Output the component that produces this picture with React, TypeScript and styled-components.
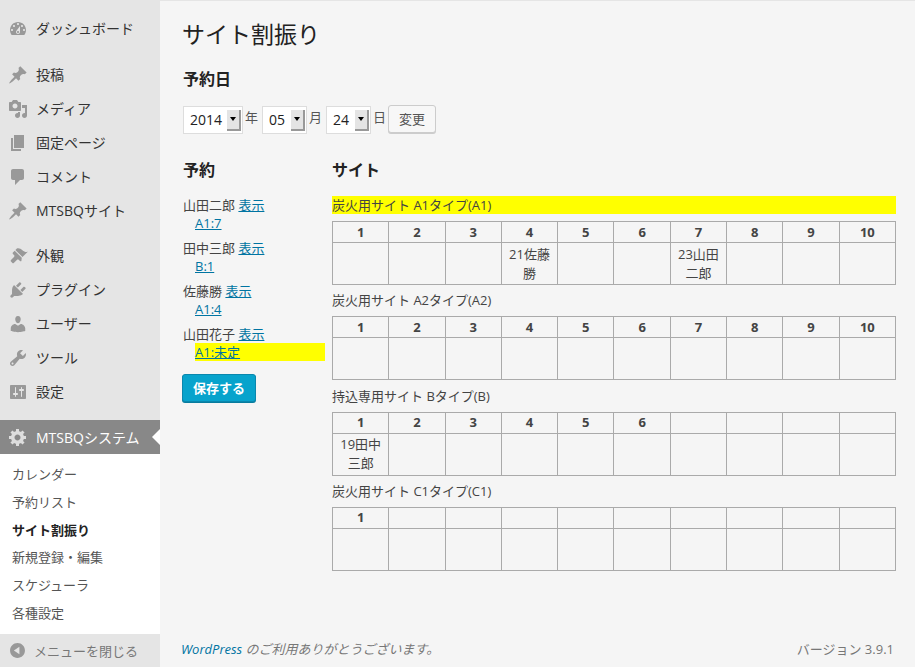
import React from "react";
import styled, { createGlobalStyle } from "styled-components";

const Global = createGlobalStyle`
  html, body { margin: 0; padding: 0; background: #f5f5f5; }
  body { font-family: "Open Sans", "Noto Sans CJK JP", sans-serif; font-size: 13px; color: #444; }
`;

const Page = styled.div`
  display: grid;
  grid-template-columns: 160px 1fr;
  width: 915px;
  height: 667px;
  overflow: hidden;
`;

const Sidebar = styled.nav`
  display: flex;
  flex-direction: column;
  background: #e5e5e5;
  padding-top: 12px;
`;

const ItemLabel = styled.span<{ $active?: boolean }>`
  padding-bottom: ${(p) => (p.$active ? 0 : 2)}px;
`;

const Item = styled.div<{ $active?: boolean }>`
  position: relative;
  display: flex;
  align-items: center;
  gap: 8px;
  height: 34px;
  flex: none;
  padding-left: 8px;
  font-size: 14px;
  color: ${(p) => (p.$active ? "#fff" : "#333")};
  background: ${(p) => (p.$active ? "#888" : "transparent")};
  svg { fill: ${(p) => (p.$active ? "#ddd" : "#999")}; }
  ${(p) =>
    p.$active &&
    `&::after {
      content: "";
      position: absolute;
      right: 0;
      top: 9px;
      border: 8px solid transparent;
      border-left-width: 0;
      border-right-color: #fff;
    }`}
`;

const Gap = styled.div<{ $h: number }>`
  height: ${(p) => p.$h}px;
  flex: none;
`;

const Sub = styled.div`
  display: flex;
  flex-direction: column;
  background: #fff;
  padding: 6px 0 7px 12px;
  flex: none;
`;

const SubItem = styled.div<{ $current?: boolean }>`
  height: 27.8px;
  line-height: 28px;
  font-size: 13px;
  font-weight: ${(p) => (p.$current ? 700 : 400)};
  color: ${(p) => (p.$current ? "#222" : "#555")};
`;

const Collapse = styled.div`
  display: flex;
  align-items: center;
  gap: 7px;
  flex: 1;
  padding-left: 8px;
  font-size: 13px;
  color: #777;
  background: #e5e5e5;
  svg { fill: #999; }
`;

const Main = styled.main`
  display: flex;
  flex-direction: column;
  border-top: 1px solid #e5e5e5;
  padding: 0 20px 0 23px;
  background: #f5f5f5;
`;

const Title = styled.h2`
  margin: 15px 0 0 -1px;
  font-size: 23px;
  font-weight: 400;
  line-height: 36px;
  color: #222;
`;

const Heading = styled.h3`
  margin: 0;
  font-size: 16px;
  font-weight: 700;
  line-height: 22px;
  color: #222;
`;

const DateHeading = styled(Heading)`
  margin-top: 16px;
`;

const ColumnHeading = styled(Heading)`
  margin-bottom: 15px;
`;

const DateRow = styled.div`
  display: flex;
  align-items: flex-start;
  margin-top: 15px;
  height: 29px;
`;

const SelectBox = styled.div<{ $w: number }>`
  box-sizing: border-box;
  width: ${(p) => p.$w}px;
  height: 28px;
  margin-top: 1px;
  display: flex;
  align-items: center;
  justify-content: space-between;
  padding: 0 1px 2px 6px;
  background: #fff;
  border: 1px solid #ddd;
  font-size: 14px;
  color: #222;
`;

const SelectArrow = styled.span`
  box-sizing: border-box;
  width: 14px;
  height: 21px;
  margin-bottom: -2px;
  display: flex;
  align-items: center;
  justify-content: center;
  background: #e4e4e4;
  border-right: 2px solid #999;
  border-bottom: 2px solid #999;
  &::before {
    content: "";
    border: 3px solid transparent;
    border-top: 4px solid #000;
    border-bottom-width: 0;
  }
`;

const DateUnit = styled.span`
  box-sizing: border-box;
  width: 19px;
  padding-left: 2px;
  line-height: 24px;
  font-size: 13px;
  color: #555;
`;

const ChangeButton = styled.button`
  box-sizing: border-box;
  width: 48px;
  height: 28px;
  margin-left: -2px;
  padding: 0 0 2px;
  border: 1px solid #ccc;
  border-radius: 3px;
  background: #f7f7f7;
  box-shadow: 0 1px 0 #ccc;
  font: 13px "Open Sans", "Noto Sans CJK JP", sans-serif;
  color: #555;
`;

const Columns = styled.div`
  display: grid;
  grid-template-columns: 149px 1fr;
  margin-top: 25px;
`;

const Reservations = styled.div`
  display: flex;
  flex-direction: column;
`;

const Reservation = styled.div`
  margin-bottom: 7px;
  line-height: 18px;
  color: #444;
`;

const Link = styled.a<{ $plain?: boolean }>`
  color: #0074a2;
  text-decoration: ${(p) => (p.$plain ? "none" : "underline")};
`;

const Assign = styled.div<{ $hl?: boolean }>`
  width: 130px;
  height: 18px;
  margin-left: 12px;
  background: ${(p) => (p.$hl ? "#ff0" : "transparent")};
`;

const SaveButton = styled.button`
  box-sizing: border-box;
  width: 74px;
  height: 28px;
  margin: 6px 0 0 -1px;
  padding: 0 0 2px;
  border: 1px solid #0a87ad;
  border-radius: 3px;
  background: #07a3cc;
  box-shadow: 0 1px 0 #077c9e;
  font: 700 13px "Open Sans", "Noto Sans CJK JP", sans-serif;
  color: #fff;
`;

const Sites = styled.div`
  display: flex;
  flex-direction: column;
`;

const SiteLabel = styled.div<{ $hl?: boolean }>`
  height: 18px;
  line-height: 18px;
  margin-bottom: 7px;
  background: ${(p) => (p.$hl ? "#ff0" : "transparent")};
  color: #444;
`;

const Grid = styled.table`
  width: 564px;
  table-layout: fixed;
  border-collapse: collapse;
  margin-bottom: 6.33px;
`;

const Th = styled.th`
  box-sizing: border-box;
  height: 21px;
  padding: 0;
  border: 1px solid #aaa;
  font-size: 13px;
  font-weight: 700;
  line-height: 19px;
  text-align: center;
  color: #444;
`;

const Td = styled.td`
  box-sizing: border-box;
  height: 42px;
  padding: 0 6px;
  border: 1px solid #aaa;
  font-size: 13px;
  line-height: 19px;
  text-align: center;
  color: #444;
`;

const Footer = styled.footer`
  display: flex;
  justify-content: space-between;
  align-items: center;
  margin-top: auto;
  margin-left: -2px;
  margin-right: 2px;
  height: 36px;
  padding-bottom: 1px;
  font-size: 13px;
  color: #777;
`;

const Thanks = styled.span`
  font-style: italic;
`;

const IconSvg = styled.svg`
  flex: none;
`;

const Icon = ({ d, size = 20 }: { d: string; size?: number }) => (
  <IconSvg width={size} height={size} viewBox="0 0 20 20">
    <path d={d} />
  </IconSvg>
);

const P = {
  dashboard:
    "M3.76 16h12.48c1.1-1.37 1.76-3.11 1.76-5 0-4.42-3.58-8-8-8s-8 3.58-8 8c0 1.89.66 3.63 1.76 5zM10 4c.55 0 1 .45 1 1s-.45 1-1 1-1-.45-1-1 .45-1 1-1zM6 6c.55 0 1 .45 1 1s-.45 1-1 1-1-.45-1-1 .45-1 1-1zm8 0c.55 0 1 .45 1 1s-.45 1-1 1-1-.45-1-1 .45-1 1-1zm-5.37 5.55L12 7v6c0 1.1-.9 2-2 2s-2-.9-2-2c0-.57.24-1.08.63-1.45zM4 10c.55 0 1 .45 1 1s-.45 1-1 1-1-.45-1-1 .45-1 1-1zm12 0c.55 0 1 .45 1 1s-.45 1-1 1-1-.45-1-1 .45-1 1-1zm-5 3c0-.55-.45-1-1-1s-1 .45-1 1 .45 1 1 1 1-.45 1-1z",
  pin: "M10.44 3.02l1.82-1.82 6.36 6.35-1.83 1.82c-1.05-.68-2.48-.57-3.41.36l-.75.75c-.92.93-1.04 2.35-.35 3.41l-1.83 1.82-2.41-2.41-2.8 2.79c-.42.42-3.38 2.71-3.8 2.29s1.86-3.39 2.28-3.81l2.79-2.79L4.1 9.36l1.83-1.82c1.05.69 2.48.57 3.4-.36l.75-.75c.93-.92 1.05-2.35.36-3.41z",
  media:
    "M13 11V4c0-.55-.45-1-1-1h-1.67L9 1H5L3.67 3H2c-.55 0-1 .45-1 1v7c0 .55.45 1 1 1h10c.55 0 1-.45 1-1zM7 4.5c1.38 0 2.5 1.12 2.5 2.5S8.38 9.5 7 9.5 4.5 8.38 4.5 7 5.62 4.5 7 4.5zM14 6h5v10.5c0 1.38-1.12 2.5-2.5 2.5S14 17.88 14 16.5s1.12-2.5 2.5-2.5c.17 0 .34.02.5.05V9h-3V6zm-4 8.05V13h2v3.5c0 1.38-1.12 2.5-2.5 2.5S7 17.88 7 16.5 8.12 14 9.5 14c.17 0 .34.02.5.05z",
  page: "M6 15V2h10v13H6zm-1 1h8v2H3V5h2v11z",
  comment:
    "M5 2h9c1.1 0 2 .9 2 2v7c0 1.1-.9 2-2 2h-2l-5 5v-5H5c-1.1 0-2-.9-2-2V4c0-1.1.9-2 2-2z",
  appearance:
    "M14.48 11.06L7.41 3.99l1.5-1.5c.5-.56 2.3-.47 3.51.32 1.21.8 1.43 1.28 2.91 2.1 1.18.64 2.45 1.26 4.45.85zm-.71.71L6.7 4.7 4.93 6.47c-.39.39-.39 1.02 0 1.41l1.06 1.06c.59.59.59 1.54 0 2.12l-3 3c-.39.39-.39 1.02 0 1.41l1.41 1.41c.39.39 1.02.39 1.41 0l3-3c.59-.59 1.54-.59 2.12 0l1.06 1.06c.39.39 1.02.39 1.41 0z",
  plugin:
    "M13.11 4.36L9.87 7.6 8 5.73l3.24-3.24c.35-.34 1.05-.2 1.56.32.52.51.66 1.21.31 1.55zm-8 1.77l.91-1.12 9.01 9.01-1.19.84c-.71.71-2.63 1.16-3.82 1.16H6.14L4.9 17.26c-.59.59-1.54.59-2.12 0-.59-.58-.59-1.53 0-2.12l1.24-1.24v-3.88c0-1.13.4-3.19 1.09-3.89zm7.26 3.97l3.24-3.24c.34-.35 1.04-.21 1.55.31.52.51.66 1.21.31 1.55l-3.24 3.25z",
  user: "M10 9.25c-2.27 0-2.73-3.44-2.73-3.44C7 4.02 7.82 2 9.97 2c2.16 0 2.98 2.02 2.71 3.81 0 0-.41 3.44-2.68 3.44zm0 2.57L12.72 10c2.39 0 4.52 2.33 4.52 4.53v2.49s-3.65 1.13-7.24 1.13c-3.65 0-7.24-1.13-7.24-1.13v-2.49c0-2.25 1.94-4.48 4.47-4.48z",
  tool: "M16.68 9.77c-1.34 1.34-3.3 1.67-4.95.99l-5.41 6.52c-.99.99-2.59.99-3.58 0s-.99-2.59 0-3.57l6.52-5.42c-.68-1.65-.35-3.61.99-4.95 1.28-1.28 3.12-1.62 4.72-1.06l-2.89 2.89 2.82 2.82 2.86-2.87c.53 1.58.18 3.39-1.08 4.65zM3.81 16.21c.4.39 1.04.39 1.43 0 .4-.4.4-1.04 0-1.43-.39-.4-1.03-.4-1.43 0-.39.39-.39 1.03 0 1.43z",
  settings:
    "M18 16V4c0-.55-.45-1-1-1H3c-.55 0-1 .45-1 1v12c0 .55.45 1 1 1h14c.55 0 1-.45 1-1zM8 11h1c.55 0 1 .45 1 1s-.45 1-1 1H8v1.5c0 .28-.22.5-.5.5s-.5-.22-.5-.5V13H6c-.55 0-1-.45-1-1s.45-1 1-1h1V5.5c0-.28.22-.5.5-.5s.5.22.5.5V11zm5-2h-1c-.55 0-1-.45-1-1s.45-1 1-1h1V5.5c0-.28.22-.5.5-.5s.5.22.5.5V7h1c.55 0 1 .45 1 1s-.45 1-1 1h-1v5.5c0 .28-.22.5-.5.5s-.5-.22-.5-.5V9z",
  gear: "M18 12h-2.18c-.17.7-.44 1.35-.81 1.93l1.54 1.54-2.1 2.1-1.54-1.54c-.58.36-1.23.63-1.91.79V19H8v-2.18c-.68-.16-1.33-.43-1.91-.79l-1.54 1.54-2.12-2.12 1.54-1.54c-.36-.58-.63-1.23-.79-1.91H1V9.03h2.17c.16-.7.44-1.35.8-1.94L2.43 5.55l2.1-2.1 1.54 1.54c.58-.37 1.24-.64 1.93-.81V2h3v2.18c.68.16 1.33.43 1.91.79l1.54-1.54 2.12 2.12-1.54 1.54c.36.59.64 1.24.8 1.94H18V12zm-8.5 1.5c1.66 0 3-1.34 3-3s-1.34-3-3-3-3 1.34-3 3 1.34 3 3 3z",
  collapse:
    "M10 2.16c4.33 0 7.84 3.51 7.84 7.84s-3.51 7.84-7.84 7.84S2.16 14.33 2.16 10 5.71 2.16 10 2.16zm2 11.72V6.12L6.18 9.97z",
};

const groups = [
  [{ i: P.dashboard, t: "ダッシュボード" }],
  [
    { i: P.pin, t: "投稿" },
    { i: P.media, t: "メディア" },
    { i: P.page, t: "固定ページ" },
    { i: P.comment, t: "コメント" },
    { i: P.pin, t: "MTSBQサイト" },
  ],
  [
    { i: P.appearance, t: "外観" },
    { i: P.plugin, t: "プラグイン" },
    { i: P.user, t: "ユーザー" },
    { i: P.tool, t: "ツール" },
    { i: P.settings, t: "設定" },
  ],
];

const subs = ["カレンダー", "予約リスト", "サイト割振り", "新規登録・編集", "スケジューラ", "各種設定"];

const people = [
  { n: "山田二郎", a: "A1:7" },
  { n: "田中三郎", a: "B:1" },
  { n: "佐藤勝", a: "A1:4" },
  { n: "山田花子", a: "A1:未定", hl: true },
];

const sites: { label: string; hl?: boolean; heads: number; cells: Record<number, string> }[] = [
  { label: "炭火用サイト A1タイプ(A1)", hl: true, heads: 10, cells: { 3: "21佐藤勝", 6: "23山田二郎" } },
  { label: "炭火用サイト A2タイプ(A2)", heads: 10, cells: {} },
  { label: "持込専用サイト Bタイプ(B)", heads: 6, cells: { 0: "19田中三郎" } },
  { label: "炭火用サイト C1タイプ(C1)", heads: 1, cells: {} },
];

const cols = Array.from({ length: 10 }, (_, i) => i);

export default function App() {
  return (
    <Page>
      <Global />
      <Sidebar>
        {groups.map((g, gi) => (
          <React.Fragment key={gi}>
            {g.map((m) => (
              <Item key={m.t}>
                <Icon d={m.i} />
                <ItemLabel>{m.t}</ItemLabel>
              </Item>
            ))}
            <Gap $h={gi === 0 ? 12 : 11} />
          </React.Fragment>
        ))}
        <Item $active>
          <Icon d={P.gear} />
          <ItemLabel $active>MTSBQシステム</ItemLabel>
        </Item>
        <Sub>
          {subs.map((s) => (
            <SubItem key={s} $current={s === "サイト割振り"}>
              {s}
            </SubItem>
          ))}
        </Sub>
        <Collapse>
          <Icon d={P.collapse} size={19} />
          <span>メニューを閉じる</span>
        </Collapse>
      </Sidebar>
      <Main>
        <Title>サイト割振り</Title>
        <DateHeading>予約日</DateHeading>
        <DateRow>
          <SelectBox $w={60}>
            2014
            <SelectArrow />
          </SelectBox>
          <DateUnit>年</DateUnit>
          <SelectBox $w={45}>
            05
            <SelectArrow />
          </SelectBox>
          <DateUnit>月</DateUnit>
          <SelectBox $w={45}>
            24
            <SelectArrow />
          </SelectBox>
          <DateUnit>日</DateUnit>
          <ChangeButton>変更</ChangeButton>
        </DateRow>
        <Columns>
          <Reservations>
            <ColumnHeading>予約</ColumnHeading>
            {people.map((p) => (
              <Reservation key={p.n}>
                {p.n} <Link>表示</Link>
                <Assign $hl={p.hl}>
                  <Link>{p.a}</Link>
                </Assign>
              </Reservation>
            ))}
            <SaveButton>保存する</SaveButton>
          </Reservations>
          <Sites>
            <ColumnHeading>サイト</ColumnHeading>
            {sites.map((s) => (
              <React.Fragment key={s.label}>
                <SiteLabel $hl={s.hl}>{s.label}</SiteLabel>
                <Grid>
                  <thead>
                    <tr>
                      {cols.map((c) => (
                        <Th key={c}>{c < s.heads ? c + 1 : ""}</Th>
                      ))}
                    </tr>
                  </thead>
                  <tbody>
                    <tr>
                      {cols.map((c) => (
                        <Td key={c}>{s.cells[c] ?? ""}</Td>
                      ))}
                    </tr>
                  </tbody>
                </Grid>
              </React.Fragment>
            ))}
          </Sites>
        </Columns>
        <Footer>
          <Thanks>
            <Link $plain>WordPress</Link> のご利用ありがとうございます。
          </Thanks>
          <span>バージョン 3.9.1</span>
        </Footer>
      </Main>
    </Page>
  );
}
